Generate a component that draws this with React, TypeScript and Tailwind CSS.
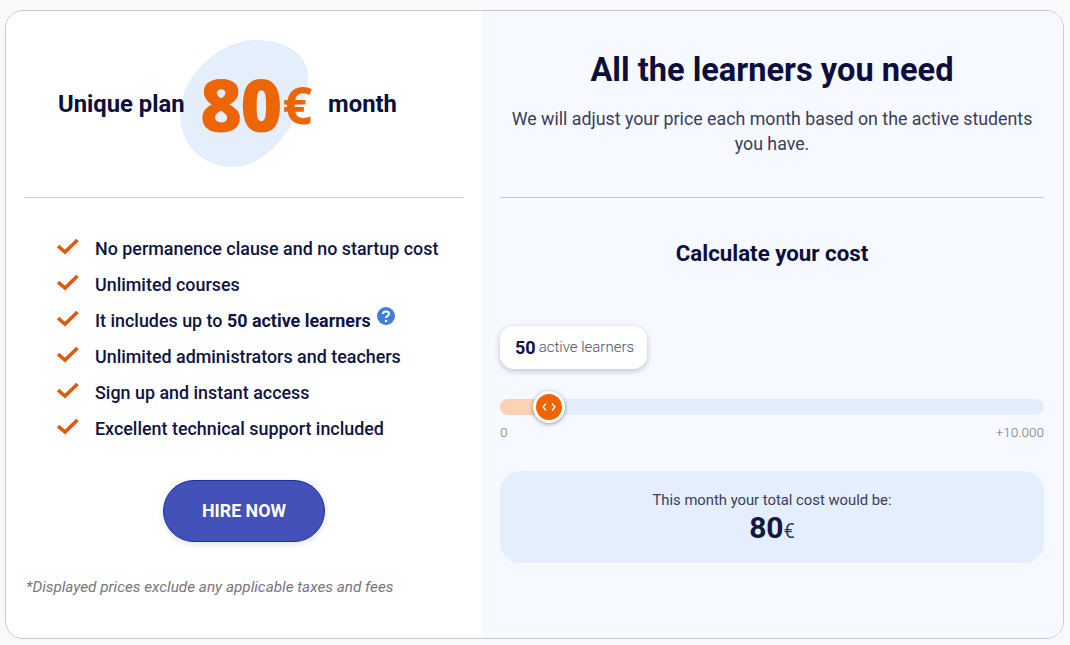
import React from "react";

const features = [
  "No permanence clause and no startup cost",
  "Unlimited courses",
  "It includes up to 50 active learners",
  "Unlimited administrators and teachers",
  "Sign up and instant access",
  "Excellent technical support included",
];

function Tick() {
  return (
    <svg width="22" height="18" viewBox="0 0 22 18" className="shrink-0 ml-[-1px] mt-[-4px]">
      <path d="M1 8 L8 14 L20.5 2" fill="none" stroke="#dd5a0e" strokeWidth="3.6" />
    </svg>
  );
}

function HelpDot() {
  return (
    <svg width="18" height="18" viewBox="0 0 18 18" className="absolute left-[282px] top-[-1px]">
      <circle cx="9" cy="9" r="9" fill="#3f7fd6" />
      <path d="M6 7 C6 3.8 12 3.8 12 7 C12 9 9 9 9 11" fill="none" stroke="#fff" strokeWidth="2" />
      <circle cx="9" cy="14" r="1.3" fill="#fff" />
    </svg>
  );
}

export default function App() {
  return (
    <div className="w-[1070px] h-[645px] bg-[#f9f9fb] pl-[5px] pt-[10px] font-['Roboto',sans-serif] overflow-hidden">
      <div className="w-[1059px] h-[629px] bg-white border-[1.5px] border-[#c9c9d3] rounded-[18px] flex overflow-hidden">
        {/* left plan column */}
        <div className="w-[476px] h-full pl-[19px] flex flex-col shrink-0">
          <div className="w-[438px] h-[187px] border-b border-[#c9cad4] flex items-center pl-[33px] relative shrink-0">
            <svg width="128" height="127" viewBox="0 0 128 127" className="absolute left-[155px] top-[29px]">
              <path d="M0 73 C0 40 35 0 77 0 C108 0 128 15 128 37 C128 70 92 127 53 127 C22 127 0 105 0 73 Z" fill="#e5eefb" />
            </svg>
            <span className="relative w-[143px] mt-[2px] text-[23.8px] font-bold text-[#0c0f3d] leading-none">Unique plan</span>
            <span className="relative font-['Open_Sans',sans-serif] font-extrabold text-[72px] leading-none text-[#ec6608] tracking-[-2px] ml-[-1px]">80</span>
            <span className="relative font-['Open_Sans',sans-serif] font-bold text-[52px] leading-none text-[#ec6608] ml-[2px] mr-[16px]">€</span>
            <span className="relative mt-[2px] text-[23.8px] font-bold text-[#0c0f3d] leading-none">month</span>
          </div>
          <ul className="pl-[33px] pt-[38px] flex flex-col gap-[10px]">
            {features.map((f, i) => (
              <li key={f} className="flex items-center h-[26px] text-[17.9px] font-medium text-[#11143f]">
                <Tick />
                <span className="relative ml-[16px]">
                  {i === 2 ? (
                    <>
                      It includes up to <b className="font-bold">50 active learners</b>
                      <HelpDot />
                    </>
                  ) : (
                    f
                  )}
                </span>
              </li>
            ))}
          </ul>
          <button className="self-start ml-[138px] mt-[38px] w-[162px] h-[62px] rounded-full bg-[#4351b8] border border-[#1a32a6] text-white font-bold text-[17.8px] shadow-[0_2px_6px_rgba(0,0,0,0.12)]">
            HIRE NOW
          </button>
          <p className="ml-[1px] mt-[34px] italic text-[15.3px] leading-[22px] text-[#77767c]">
            *Displayed prices exclude any applicable taxes and fees
          </p>
        </div>
        {/* right calculator column */}
        <div className="flex-1 h-full bg-[#f6f9ff] pl-[18px] flex flex-col">
          <div className="w-[544px] h-[187px] border-b border-[#c9cad4] text-center shrink-0">
            <h2 className="pt-[38px] text-[32.6px] leading-[42px] font-bold text-[#0c0f3d]">All the learners you need</h2>
            <p className="mt-[15px] text-[17.8px] leading-[25px] text-[#3b3d5a]">
              We will adjust your price each month based on the active students you have.
            </p>
          </div>
          <h3 className="w-[544px] mt-[40px] text-center text-[22.3px] leading-[30px] font-bold text-[#0c0f3d]">Calculate your cost</h3>
          <div className="mt-[58px] self-start w-[147px] h-[43px] pl-[15px] rounded-[14px] bg-white shadow-[0_2px_6px_rgba(0,0,0,0.22)] flex items-center">
            <span className="text-[18px] font-bold text-[#11143f]">50</span>
            <span className="ml-[3px] text-[15px] font-light text-[#4d4e68]">active learners</span>
          </div>
          <div className="relative mt-[30px] w-[544px] h-[16px] rounded-full bg-[#e4edfc]">
            <div className="h-full w-[40px] rounded-l-full bg-[#fdd2b4]" />
            <div className="absolute left-[33px] top-[-8px] w-[32px] h-[32px] rounded-full bg-[#f06400] border-[3px] border-white shadow-[0_1px_4px_rgba(0,0,0,0.4)] flex items-center justify-center">
              <svg width="16" height="10" viewBox="0 0 16 10">
                <path d="M5 1.5 L2 5 L5 8.5 M11 1.5 L14 5 L11 8.5" fill="none" stroke="#fff" strokeWidth="1.3" />
              </svg>
            </div>
          </div>
          <div className="w-[544px] mt-[9px] flex justify-between text-[13.5px] font-light leading-[16px] text-[#75767f]">
            <span>0</span>
            <span>+10.000</span>
          </div>
          <div className="w-[544px] h-[92px] mt-[31px] rounded-[20px] bg-[#e4eefd] flex flex-col items-center pt-[19px]">
            <span className="text-[14.8px] leading-[20px] text-[#3b3d5a]">This month your total cost would be:</span>
            <span className="leading-[36px] text-[#14173f]">
              <span className="text-[30px] font-bold">80</span>
              <span className="text-[20px] text-[#3b3d5a]">€</span>
            </span>
          </div>
        </div>
      </div>
    </div>
  );
}
